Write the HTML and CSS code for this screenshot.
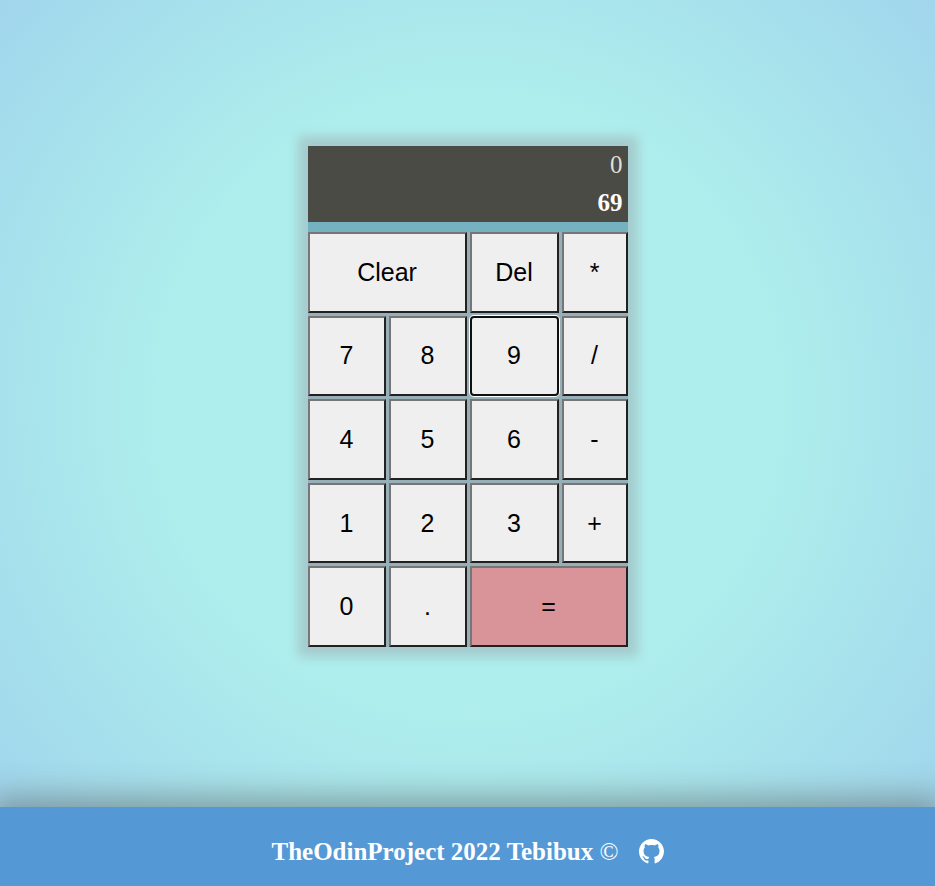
FILE: index.html
```html
<!DOCTYPE html>
<html lang="en">
<head>
<meta charset="utf-8">
<title>Calculator</title>
<link rel="stylesheet" href="styles.css">
</head>
<body>
<main class="page">
  <section class="calculator" aria-label="Calculator">
    <div class="display">
      <div class="previous">0</div>
      <div class="current">69</div>
    </div>
    <div class="keys">
      <button type="button" class="wide">Clear</button>
      <button type="button">Del</button>
      <button type="button">*</button>
      <button type="button">7</button>
      <button type="button">8</button>
      <button type="button" class="active">9</button>
      <button type="button">/</button>
      <button type="button">4</button>
      <button type="button">5</button>
      <button type="button">6</button>
      <button type="button">-</button>
      <button type="button">1</button>
      <button type="button">2</button>
      <button type="button">3</button>
      <button type="button">+</button>
      <button type="button">0</button>
      <button type="button">.</button>
      <button type="button" class="wide equals">=</button>
    </div>
  </section>
</main>
<footer class="footer">
  <span>TheOdinProject 2022 Tebibux <span class="copy">©</span></span>
  <a href="#" aria-label="GitHub"><svg class="github" viewBox="0 0 16 16" aria-hidden="true"><path fill="currentColor" d="M8 0C3.58 0 0 3.58 0 8c0 3.54 2.29 6.53 5.47 7.59.4.07.55-.17.55-.38 0-.19-.01-.82-.01-1.49-2.01.37-2.53-.49-2.69-.94-.09-.23-.48-.94-.82-1.13-.28-.15-.68-.52-.01-.53.63-.01 1.08.58 1.23.82.72 1.21 1.87.87 2.33.66.07-.52.28-.87.51-1.07-1.78-.2-3.64-.89-3.64-3.95 0-.87.31-1.59.82-2.15-.08-.2-.36-1.02.08-2.12 0 0 .67-.21 2.2.82.64-.18 1.32-.27 2-.27s1.36.09 2 .27c1.53-1.04 2.2-.82 2.2-.82.44 1.1.16 1.92.08 2.12.51.56.82 1.27.82 2.15 0 3.07-1.87 3.75-3.65 3.95.29.25.54.73.54 1.48 0 1.07-.01 1.93-.01 2.2 0 .21.15.46.55.38A8.01 8.01 0 0 0 16 8c0-4.42-3.58-8-8-8z"/></svg></a>
</footer>
</body>
</html>
```
FILE: styles.css
```css
* {
  box-sizing: border-box;
}

body {
  margin: 0;
  min-height: 100vh;
  display: flex;
  flex-direction: column;
  font-family: "Liberation Serif", "Times New Roman", serif;
  font-size: 25px;
}

.page {
  flex: 1;
  display: flex;
  align-items: center;
  justify-content: center;
  padding-bottom: 14px;
  background: radial-gradient(circle, #aeeeec 50%, #a1d6ec 100%);
}

.calculator {
  width: 320px;
  display: flex;
  flex-direction: column;
  gap: 10px;
  background: #75b2c1;
  box-shadow: 0 0 10px 10px rgba(152, 153, 160, 0.4);
}

.display {
  background: #4b4b45;
  color: #fff;
  text-align: right;
  padding: 0 5px;
  line-height: 38px;
}

.previous {
  color: #dfdfdc;
}

.current {
  font-weight: bold;
}

.keys {
  display: grid;
  grid-template-columns: 78fr 78fr 89fr 66fr;
  grid-auto-rows: 1fr;
  gap: 3px;
  height: 415px;
  background: #97afb6;
}

.keys button {
  padding: 0;
  border: 2px solid;
  border-color: #767676 #212121 #212121 #767676;
  background: #efefef;
  color: #000;
  font-family: "Liberation Sans", Arial, sans-serif;
  font-size: 25px;
}

.keys .wide {
  grid-column: span 2;
}

.keys .equals {
  background: #d99499;
}

.keys .active {
  border-color: #101010;
  border-radius: 4px;
  box-shadow: 0 0 0 1px #fff;
}

.footer {
  height: 79px;
  display: flex;
  align-items: center;
  justify-content: center;
  gap: 20px;
  padding-top: 10px;
  background: #5499d5;
  color: #fff;
  font-weight: bold;
  box-shadow: 0 0 30px 10px rgba(75, 75, 69, 0.45);
}

.copy {
  font-weight: normal;
}

.footer a {
  display: flex;
  color: inherit;
}

.github {
  width: 25px;
  height: 25px;
}
```
